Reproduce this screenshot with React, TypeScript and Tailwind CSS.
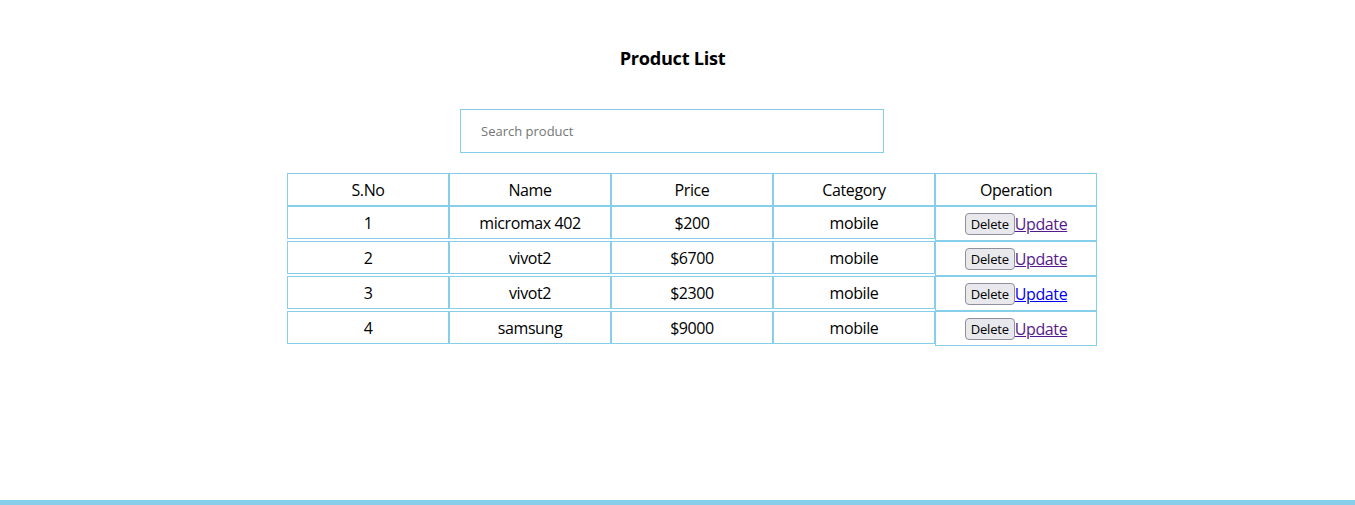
import React from "react";

const rows = [
  { id: 1, name: "micromax 402", price: "$200", category: "mobile", visited: true },
  { id: 2, name: "vivot2", price: "$6700", category: "mobile", visited: true },
  { id: 3, name: "vivot2", price: "$2300", category: "mobile", visited: false },
  { id: 4, name: "samsung", price: "$9000", category: "mobile", visited: true },
];

function Cell({ children }: { children: React.ReactNode }) {
  return (
    <div className="box-border flex h-[33px] w-[162px] items-center justify-center border border-[#87ceeb] text-[16px] tracking-[-0.4px] text-black">
      {children}
    </div>
  );
}

export default function App() {
  return (
    <div
      className="flex h-screen flex-col bg-white"
      style={{ fontFamily: '"Open Sans", "Noto Sans", sans-serif' }}
    >
      <div className="flex-1">
        <div className="flex justify-center pr-[10px] pt-[46px]">
          <h3 className="text-[18.2px] font-bold leading-[24px] tracking-[-0.3px] text-black">Product List</h3>
        </div>
        <div className="mt-[39px] flex justify-center pr-[11px]">
          <input
            className="box-border h-[44px] w-[424px] border border-[#87ceeb] pl-[20px] text-[13px] outline-none placeholder:text-[#757575]"
            placeholder="Search product"
          />
        </div>
        <div className="mt-[20px] flex justify-center pl-[29px]">
          <div className="flex flex-col">
            <div className="flex">
              <Cell>S.No</Cell>
              <Cell>Name</Cell>
              <Cell>Price</Cell>
              <Cell>Category</Cell>
              <Cell>Operation</Cell>
            </div>
            {rows.map((r) => (
              <div key={r.id} className="flex items-start">
                <Cell>{r.id}</Cell>
                <Cell>{r.name}</Cell>
                <Cell>{r.price}</Cell>
                <Cell>{r.category}</Cell>
                <div className="box-border flex h-[35px] w-[162px] items-center justify-center border border-[#87ceeb] pt-[1px]">
                  <button className="box-border h-[22px] rounded-[4px] border border-[#8f8f9d] bg-[#e9e9ed] px-[5px] text-[13px] leading-[18px] tracking-[-0.2px] text-black">
                    Delete
                  </button>
                  <a
                    href="#"
                    className={`text-[16px] leading-[21px] tracking-[-0.4px] underline ${r.visited ? "text-[#551a8b]" : "text-[#0000ee]"}`}
                  >
                    Update
                  </a>
                </div>
              </div>
            ))}
          </div>
        </div>
      </div>
      <div className="h-[5px] w-full bg-[#87ceeb]" />
    </div>
  );
}
